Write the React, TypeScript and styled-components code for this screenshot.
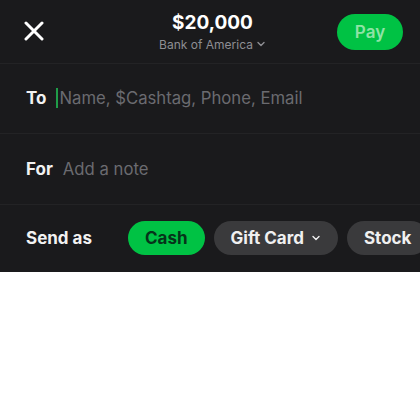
import React from "react";
import styled, { createGlobalStyle } from "styled-components";

const GlobalStyle = createGlobalStyle`
  html, body {
    margin: 0;
    padding: 0;
    background: #ffffff;
  }
  body {
    font-family: Inter, "Noto Sans", sans-serif;
  }
`;

const Screen = styled.div`
  width: 420px;
  height: 272px;
  background-color: #1a1a1c;
  color: #ffffff;
  overflow: hidden;
  display: flex;
  flex-direction: column;
`;

const Header = styled.div`
  height: 63px;
  display: grid;
  grid-template-columns: 1fr auto 1fr;
  align-items: center;
  padding: 0 17px 0 22px;
  border-bottom: 1px solid #232325;
`;

const CloseButton = styled.div`
  width: 24px;
  height: 24px;
  display: flex;
  align-items: center;
  justify-content: center;
`;

const Amount = styled.div`
  display: flex;
  flex-direction: column;
  align-items: center;
  margin-top: 0;
`;

const AmountValue = styled.div`
  font-size: 19px;
  font-weight: 700;
`;

const Bank = styled.div`
  font-size: 12px;
  color: #8e8e93;
  margin-top: 3px;
  display: flex;
  align-items: center;
  gap: 3px;
`;

const PayButton = styled.div`
  justify-self: end;
  width: 66px;
  height: 36px;
  border-radius: 18px;
  background-color: #00c244;
  color: #8fe3a6;
  font-size: 17px;
  font-weight: 600;
  display: flex;
  align-items: center;
  justify-content: center;
  margin-top: 1px;
`;

const Row = styled.div<{ $h: number; $divider?: boolean }>`
  height: ${(p) => p.$h}px;
  display: flex;
  align-items: center;
  padding-left: 26px;
  gap: 10px;
  border-bottom: ${(p) => (p.$divider ? "1px solid #232325" : "none")};
  white-space: nowrap;
`;

const Label = styled.span`
  font-size: 17px;
  font-weight: 700;
  color: #f2f2f2;
  flex-shrink: 0;
`;

const Placeholder = styled.span`
  font-size: 16.7px;
  color: #6b6b70;
  display: flex;
  align-items: center;
`;

const Cursor = styled.span`
  display: inline-block;
  width: 2px;
  height: 20px;
  background-color: #1f9c48;
  margin-right: 1px;
`;

const Pills = styled.div`
  display: flex;
  gap: 9px;
  margin-left: 26px;
  flex-shrink: 0;
`;

const Pill = styled.div<{ $active?: boolean }>`
  height: 34px;
  padding: 0 17px;
  border-radius: 17px;
  background-color: ${(p) => (p.$active ? "#00c244" : "#3a3a3c")};
  color: ${(p) => (p.$active ? "#06331a" : "#f0f0f0")};
  font-size: 17px;
  font-weight: 700;
  display: flex;
  align-items: center;
  gap: 7px;
  flex-shrink: 0;
`;

const Chevron: React.FC<{ size: number; color: string }> = ({ size, color }) => (
  <svg width={size} height={size} viewBox="0 0 10 10" fill="none">
    <path d="M2 3.5 L5 6.5 L8 3.5" stroke={color} strokeWidth="1.4" strokeLinecap="round" strokeLinejoin="round" />
  </svg>
);

export default function App() {
  return (
    <>
      <GlobalStyle />
      <Screen>
        <Header>
          <CloseButton>
            <svg width="20" height="20" viewBox="0 0 20 20">
              <path d="M2 2 L18 18 M18 2 L2 18" stroke="#ffffff" strokeWidth="3" strokeLinecap="round" />
            </svg>
          </CloseButton>
          <Amount>
            <AmountValue>$20,000</AmountValue>
            <Bank>
              Bank of America
              <Chevron size={10} color="#8e8e93" />
            </Bank>
          </Amount>
          <PayButton>Pay</PayButton>
        </Header>
        <Row $h={70} $divider>
          <Label>To</Label>
          <Placeholder>
            <Cursor />
            Name, $Cashtag, Phone, Email
          </Placeholder>
        </Row>
        <Row $h={70} $divider>
          <Label>For</Label>
          <Placeholder>Add a note</Placeholder>
        </Row>
        <Row $h={68}>
          <Label>Send as</Label>
          <Pills>
            <Pill $active>Cash</Pill>
            <Pill>
              Gift Card
              <Chevron size={10} color="#f0f0f0" />
            </Pill>
            <Pill>Stock</Pill>
          </Pills>
        </Row>
      </Screen>
    </>
  );
}
